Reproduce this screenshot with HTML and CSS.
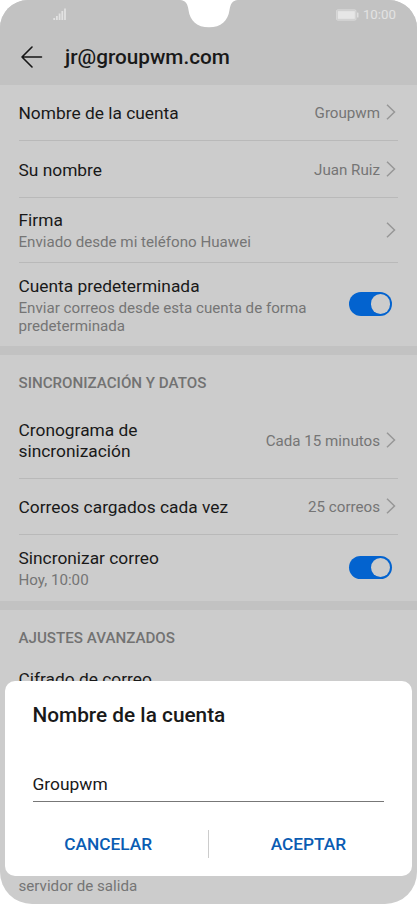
FILE: index.html
```
<!DOCTYPE html>
<html lang="es">
<head>
  <meta charset="UTF-8">
  <title>Ajustes de cuenta</title>
  <meta name="viewport" content="width=device-width, initial-scale=1.0">
  <link rel="stylesheet" href="styles.css">
</head>
<body>
  <div class="phone">
    <svg class="notch" width="58" height="28" viewBox="0 0 58 28">
      <path d="M0 0C6 0.500 7.500 4 8.500 10C10 21 17 27.300 29 27.300C41 27.300 48 21 49.500 10C50.500 4 52 0.500 58 0Z" fill="#fff"/>
    </svg>

    <header class="header">
      <div class="status-bar">
        <svg class="signal" width="14" height="13" viewBox="0 0 14 13" fill="#e2e2e2">
          <rect x="0.300" y="10" width="1.800" height="2"/>
          <rect x="3" y="8" width="1.800" height="4"/>
          <rect x="5.700" y="5.500" width="1.800" height="6.500"/>
          <rect x="8.400" y="3" width="1.800" height="9"/>
          <rect x="11.100" y="0.500" width="1.800" height="11.500"/>
        </svg>
        <div class="status-right">
          <svg width="23" height="12" viewBox="0 0 23 12">
            <rect x="0.500" y="0.800" width="19.500" height="10.400" rx="1.200" fill="#cfcfcf" stroke="#dadada" stroke-width="0.800"/>
            <rect x="1.800" y="2.200" width="17" height="7.600" fill="#e6e6e6"/>
            <rect x="21" y="3.500" width="1.500" height="5" rx="0.500" fill="#dedede"/>
          </svg>
          <span class="clock">10:00</span>
        </div>
      </div>
      <div class="title-bar">
        <svg width="22" height="22" viewBox="0 0 22 22" fill="none" stroke="#161616" stroke-width="1.600" stroke-linecap="round" stroke-linejoin="round">
          <path d="M11 1L1 11L11 21M1 11H20.500"/>
        </svg>
        <h1>jr@groupwm.com</h1>
      </div>
    </header>

    <section class="group">
      <div class="row row-account">
        <div class="label">Nombre de la cuenta</div>
        <div class="value">Groupwm</div>
        <svg class="chevron" viewBox="0 0 10 16"><path d="M1 0.700L8.500 8L1 15.300"/></svg>
      </div>
      <div class="row row-name">
        <div class="label">Su nombre</div>
        <div class="value">Juan Ruiz</div>
        <svg class="chevron" viewBox="0 0 10 16"><path d="M1 0.700L8.500 8L1 15.300"/></svg>
      </div>
      <div class="row row-signature">
        <div class="text">
          <div class="label">Firma</div>
          <div class="detail">Enviado desde mi teléfono Huawei</div>
        </div>
        <svg class="chevron" viewBox="0 0 10 16"><path d="M1 0.700L8.500 8L1 15.300"/></svg>
      </div>
      <div class="row row-default">
        <div class="text">
          <div class="label">Cuenta predeterminada</div>
          <div class="detail">Enviar correos desde esta cuenta de forma<br>predeterminada</div>
        </div>
        <div class="switch"></div>
      </div>
    </section>

    <section class="group">
      <h2>SINCRONIZACIÓN Y DATOS</h2>
      <div class="row row-schedule">
        <div class="label">Cronograma de<br>sincronización</div>
        <div class="value">Cada 15 minutos</div>
        <svg class="chevron" viewBox="0 0 10 16"><path d="M1 0.700L8.500 8L1 15.300"/></svg>
      </div>
      <div class="row row-count">
        <div class="label">Correos cargados cada vez</div>
        <div class="value">25 correos</div>
        <svg class="chevron" viewBox="0 0 10 16"><path d="M1 0.700L8.500 8L1 15.300"/></svg>
      </div>
      <div class="row row-sync">
        <div class="text">
          <div class="label">Sincronizar correo</div>
          <div class="detail">Hoy, 10:00</div>
        </div>
        <div class="switch"></div>
      </div>
    </section>

    <section class="group group-last">
      <h2>AJUSTES AVANZADOS</h2>
      <div class="label">Cifrado de correo</div>
      <div class="detail outgoing">servidor de salida</div>
    </section>

    <!-- Account name dialog -->
    <div class="dialog">
      <h3>Nombre de la cuenta</h3>
      <div class="field">Groupwm</div>
      <div class="buttons">
        <button type="button">CANCELAR</button>
        <button type="button">ACEPTAR</button>
      </div>
    </div>
  </div>
</body>
</html>
```
FILE: styles.css
```
* {
  box-sizing: border-box;
}
body {
  margin: 0;
  background: #fff;
  font-family: Roboto, sans-serif;
  color: #191919;
}
h1, h2, h3 {
  margin: 0;
  font-weight: 500;
}
.phone {
  position: relative;
  display: flex;
  flex-direction: column;
  width: 417px;
  height: 904px;
  background: #ccc;
  border-radius: 28px 28px 32px 32px;
  overflow: hidden;
}
.notch {
  position: absolute;
  top: 0;
  left: 180px;
}

/* Header */
.header {
  height: 85px;
  background: #c2c2c2;
}
.status-bar {
  display: flex;
  justify-content: space-between;
  align-items: center;
  height: 30px;
  padding: 0 21px 0 53px;
}
.signal {
  margin-bottom: 2px;
}
.status-right {
  display: flex;
  align-items: center;
  gap: 4px;
}
.clock {
  font-size: 13.3px;
  line-height: 16px;
  color: #e2e2e2;
}
.title-bar {
  display: flex;
  align-items: center;
  gap: 22px;
  height: 54px;
  padding-left: 21px;
}
h1 {
  font-size: 20.75px;
  line-height: 24px;
}

/* Settings list */
.group {
  padding: 0 19px 0 18.5px;
  border-bottom: 9px solid #c2c2c2;
}
.group-last {
  display: flex;
  flex-direction: column;
  flex: 1;
  border-bottom: none;
}
h2 {
  height: 48px;
  padding-top: 18px;
  font-size: 15.15px;
  line-height: 20px;
  color: #727272;
}
.row {
  display: flex;
  align-items: center;
  border-bottom: 1px solid #b9b9b9;
}
.row:last-child {
  border-bottom: none;
}
.row-account {
  height: 56px;
}
.row-name {
  height: 57px;
}
.row-signature {
  height: 65px;
}
.row-default {
  height: 83px;
}
.row-schedule {
  height: 76px;
}
.row-count {
  height: 56px;
}
.row-sync {
  height: 66px;
}
.label {
  font-size: 17.35px;
  line-height: 21px;
}
.row-account .label,
.row-name .label,
.row-count .label,
.row-default .text {
  padding-top: 2px;
}
.detail,
.value {
  font-size: 15.15px;
  line-height: 18px;
  color: #757575;
}
.detail {
  margin-top: 2px;
}
.row-signature .text {
  padding-top: 1px;
}
.value {
  margin-left: auto;
}
.row-account .value,
.row-name .value,
.row-count .value {
  padding-top: 1px;
}
.chevron {
  width: 10px;
  height: 16px;
  margin: 0 2px 1px 6px;
  fill: none;
  stroke: #979797;
  stroke-width: 1.5;
}
.text + .chevron {
  margin-left: auto;
}
.switch {
  width: 43px;
  height: 23.4px;
  margin: 0 6px 1px auto;
  padding: 1.9px;
  border-radius: 12px;
  background: #0363cf;
}
.switch::after {
  content: "";
  display: block;
  width: 19.6px;
  height: 19.6px;
  margin-left: auto;
  border-radius: 50%;
  background: #ccc;
}
.group-last .label {
  margin-top: 11px;
}
.outgoing {
  margin-top: auto;
  margin-bottom: 9px;
}

/* Dialog */
.dialog {
  position: absolute;
  left: 5px;
  bottom: 28px;
  width: 407px;
  height: 195px;
  padding: 21px 28px 0 27.5px;
  border-radius: 10px;
  background: #fff;
}
h3 {
  font-size: 20.8px;
  line-height: 26px;
}
.field {
  height: 30px;
  margin-top: 44px;
  border-bottom: 1px solid #777;
  font-size: 17.4px;
  line-height: 24px;
}
.buttons {
  display: flex;
  height: 28px;
  margin: 28px -24px 0;
}
.buttons button {
  flex: 1;
  padding: 0;
  border: none;
  background: none;
  font-family: inherit;
  font-size: 17.3px;
  font-weight: 500;
  color: #0a5cb3;
}
.buttons button + button {
  border-left: 1px solid #ccc;
}
```
